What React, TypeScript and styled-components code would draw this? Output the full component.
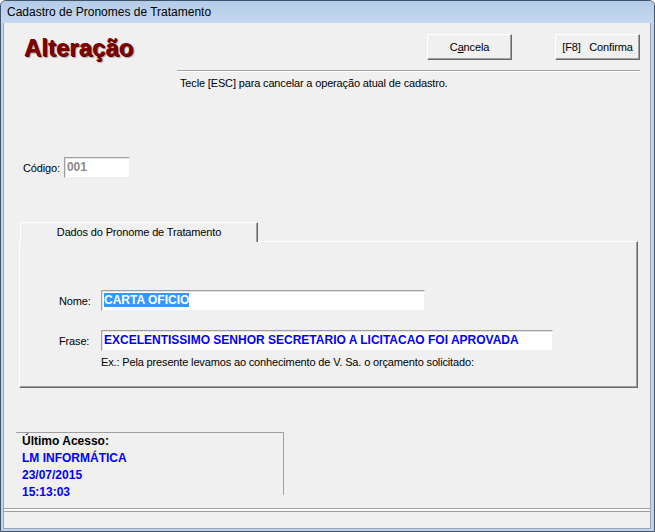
import styled, { createGlobalStyle } from 'styled-components';

const GlobalStyle = createGlobalStyle`
    html, body {
        margin: 0;
        padding: 0;
        background: #f0f0f0;
    }
    body {
        font-family: "Liberation Sans", Arial, sans-serif;
        font-size: 11px;
        letter-spacing: -0.15px;
        color: #000;
    }
`;

const Window = styled.div`
    width: 655px;
    height: 532px;
    box-sizing: border-box;
    display: flex;
    flex-direction: column;
    background: #bcd4ee;
    border: 1px solid #43546a;
    border-radius: 6px 6px 0 0;
    padding: 0 3px 2px 2px;
    overflow: hidden;
`;

const TitleBar = styled.div`
    height: 22px;
    margin: 0 -3px 0 -2px;
    padding-left: 6px;
    display: flex;
    align-items: center;
    background: linear-gradient(#b4cce9, #c4d9ef);
    font-size: 12px;
    letter-spacing: 0;
    color: #000;
`;

const Client = styled.div`
    flex: 1;
    display: flex;
    flex-direction: column;
    background: #f0f0f0;
    border: 1px solid #9aa6b4;
    border-top: 0;
`;

const Header = styled.div`
    display: flex;
    align-items: flex-start;
    padding: 11px 10px 0 20px;
`;

const Heading = styled.h1`
    margin: 2px 0 0;
    flex: 1;
    font-family: "Liberation Sans", Arial, sans-serif;
    font-size: 24px;
    font-weight: bold;
    line-height: 24px;
    letter-spacing: 0;
    color: #800000;
    text-shadow: 1px 1px 0 #5a0000, 2px 2px 1px #b8a8a8;
`;

const Button = styled.button`
    width: 85px;
    height: 26px;
    padding: 0;
    margin-left: 43px;
    background: #f0f0f0;
    border: 1px solid;
    border-color: #fff #696969 #696969 #fff;
    box-shadow: inset -1px -1px 0 #a0a0a0;
    font-family: "Liberation Sans", Arial, sans-serif;
    font-size: 11px;
    letter-spacing: -0.15px;
    color: #000;
    white-space: pre;
`;

const Divider = styled.div`
    margin: 10px 10px 0 173px;
    border-top: 1px solid #a0a0a0;
    border-bottom: 1px solid #fff;
`;

const Hint = styled.div`
    margin: 4px 0 0 176px;
    line-height: 14px;
`;

const CodeRow = styled.div`
    display: flex;
    align-items: center;
    margin: 67px 0 0 19px;
`;

const Label = styled.span<{ width?: number }>`
    width: ${({ width }) => (width ? `${width}px` : 'auto')};
    margin-right: ${({ width }) => (width ? 0 : 4)}px;
`;

const TextBox = styled.div<{ width: number; muted?: boolean }>`
    box-sizing: border-box;
    width: ${({ width }) => width}px;
    height: 21px;
    padding: 2px 2px 0;
    background: #fff;
    border: 1px solid;
    border-color: #a0a0a0 #f0f0f0 #f0f0f0 #a0a0a0;
    box-shadow: inset 1px 1px 0 #e3e3e3;
    font-size: 12px;
    font-weight: bold;
    line-height: 15px;
    letter-spacing: 0;
    color: ${({ muted }) => (muted ? '#8a8a8a' : '#0000ff')};
    white-space: nowrap;
    overflow: hidden;
`;

const Selected = styled.span`
    background: #3399ff;
    color: #fff;
`;

const TabStrip = styled.div`
    display: flex;
    margin: 44px 0 0 16px;
    position: relative;
    z-index: 1;
`;

const Tab = styled.div`
    box-sizing: border-box;
    width: 238px;
    height: 20px;
    padding-top: 3px;
    text-align: center;
    background: #f0f0f0;
    border-top: 1px solid #fff;
    border-left: 1px solid #fff;
    border-right: 1px solid #696969;
    box-shadow: inset -1px 0 0 #a0a0a0;
    margin-bottom: -1px;
    line-height: 13px;
`;

const Panel = styled.div`
    box-sizing: border-box;
    height: 147px;
    margin: 0 12px 0 15px;
    padding: 48px 0 0 39px;
    border-top: 1px solid #fff;
    border-left: 1px solid #fff;
    border-right: 1px solid #696969;
    border-bottom: 1px solid #696969;
    box-shadow: inset -1px -1px 0 #a0a0a0;
`;

const FieldRow = styled.div<{ gap?: number }>`
    display: flex;
    align-items: center;
    margin-top: ${({ gap }) => gap || 0}px;
`;

const Example = styled.div`
    margin: 4px 0 0 42px;
    line-height: 14px;
`;

const LastAccess = styled.div`
    box-sizing: border-box;
    width: 268px;
    height: 63px;
    margin: 44px 0 0 12px;
    padding: 0 0 0 6px;
    border-top: 1px solid #a0a0a0;
    border-right: 1px solid #a0a0a0;
    line-height: 17px;
    font-size: 12px;
    font-weight: bold;
    letter-spacing: 0;
`;

const AccessLine = styled.div<{ blue?: boolean }>`
    height: 17px;
    color: ${({ blue }) => (blue ? '#0000ff' : '#000')};
    white-space: nowrap;
`;

const Spacer = styled.div`
    flex: 1;
`;

const Separator = styled.div`
    border-top: 1px solid #a0a0a0;
    border-bottom: 1px solid #fff;
`;

const StatusBar = styled.div`
    height: 16px;
    margin-top: 1px;
    border-top: 1px solid #a0a0a0;
`;

export default function App() {
    return (
        <>
            <GlobalStyle />
            <Window>
                <TitleBar>Cadastro de Pronomes de Tratamento</TitleBar>
                <Client>
                    <Header>
                        <Heading>Alteração</Heading>
                        <Button>
                            C<u>a</u>ncela
                        </Button>
                        <Button>{'[F8]   Confirma'}</Button>
                    </Header>
                    <Divider />
                    <Hint>Tecle [ESC] para cancelar a operação atual de cadastro.</Hint>
                    <CodeRow>
                        <Label>Código:</Label>
                        <TextBox width={66} muted>
                            001
                        </TextBox>
                    </CodeRow>
                    <TabStrip>
                        <Tab>Dados do Pronome de Tratamento</Tab>
                    </TabStrip>
                    <Panel>
                        <FieldRow>
                            <Label width={42}>Nome:</Label>
                            <TextBox width={324}>
                                <Selected>CARTA OFICIO</Selected>
                            </TextBox>
                        </FieldRow>
                        <FieldRow gap={19}>
                            <Label width={42}>Frase:</Label>
                            <TextBox width={452}>
                                EXCELENTISSIMO SENHOR SECRETARIO A LICITACAO FOI APROVADA
                            </TextBox>
                        </FieldRow>
                        <Example>
                            Ex.: Pela presente levamos ao conhecimento de V. Sa. o orçamento solicitado:
                        </Example>
                    </Panel>
                    <LastAccess>
                        <AccessLine>Último Acesso:</AccessLine>
                        <AccessLine blue>LM INFORMÁTICA</AccessLine>
                        <AccessLine blue>23/07/2015</AccessLine>
                        <AccessLine blue>15:13:03</AccessLine>
                    </LastAccess>
                    <Spacer />
                    <Separator />
                    <StatusBar />
                </Client>
            </Window>
        </>
    );
}
